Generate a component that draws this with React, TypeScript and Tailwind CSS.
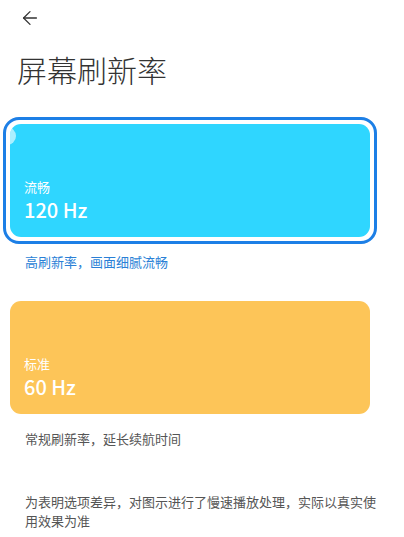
import { ArrowLeft } from 'lucide-react';

const font = { fontFamily: '"Noto Sans CJK SC", "Noto Sans", sans-serif' };

interface RateCardProps {
  label: string;
  rate: string;
  hint: string;
  selected?: boolean;
  color: string;
}

function RateCard({ label, rate, hint, selected, color }: RateCardProps) {
  return (
    <div className="flex flex-col">
      <div
        className={`ml-[3px] w-[374px] rounded-[16px] border-[3px] p-[4px] ${
          selected ? 'border-[#1d7fe6]' : 'border-transparent'
        }`}
      >
        <div className={`relative h-[113px] overflow-hidden rounded-[11px] ${color} flex flex-col justify-end px-[14px] pb-[16px]`}>
          {selected && (
            <div className="absolute -left-[12px] top-[3px] h-[18px] w-[18px] rounded-full bg-white/60" />
          )}
          <span className="text-[13px] leading-[18px] text-white">{label}</span>
          <span className="mt-[3px] text-[20px] font-medium leading-[22px] text-white">{rate}</span>
        </div>
      </div>
      <p
        className={`mt-[9px] pl-[25px] text-[13px] leading-[18px] ${
          selected ? 'text-[#2a7fd6]' : 'text-[#555555]'
        }`}
      >
        {hint}
      </p>
    </div>
  );
}

export default function App() {
  return (
    <div className="h-[537px] w-[404px] overflow-hidden bg-white" style={font}>
      {/* Header */}
      <div className="px-[19px] pt-[7px]">
        <ArrowLeft className="h-[22px] w-[22px] text-[#333333]" strokeWidth={1.4} />
      </div>
      <h1 className="mt-[20px] pl-[17px] text-[30px] font-light leading-[40px] text-[#333333]">
        屏幕刷新率
      </h1>

      {/* Options */}
      <div className="mt-[28px] flex flex-col gap-[23px]">
        <RateCard
          label="流畅"
          rate="120 Hz"
          hint="高刷新率，画面细腻流畅"
          color="bg-[#2fd6ff]"
          selected
        />
        <RateCard
          label="标准"
          rate="60 Hz"
          hint="常规刷新率，延长续航时间"
          color="bg-[#fdc558]"
        />
      </div>

      <p className="mt-[44px] w-[376px] pl-[25px] text-[13px] leading-[19px] text-[#555555]">
        为表明选项差异，对图示进行了慢速播放处理，实际以真实使用效果为准
      </p>
    </div>
  );
}
